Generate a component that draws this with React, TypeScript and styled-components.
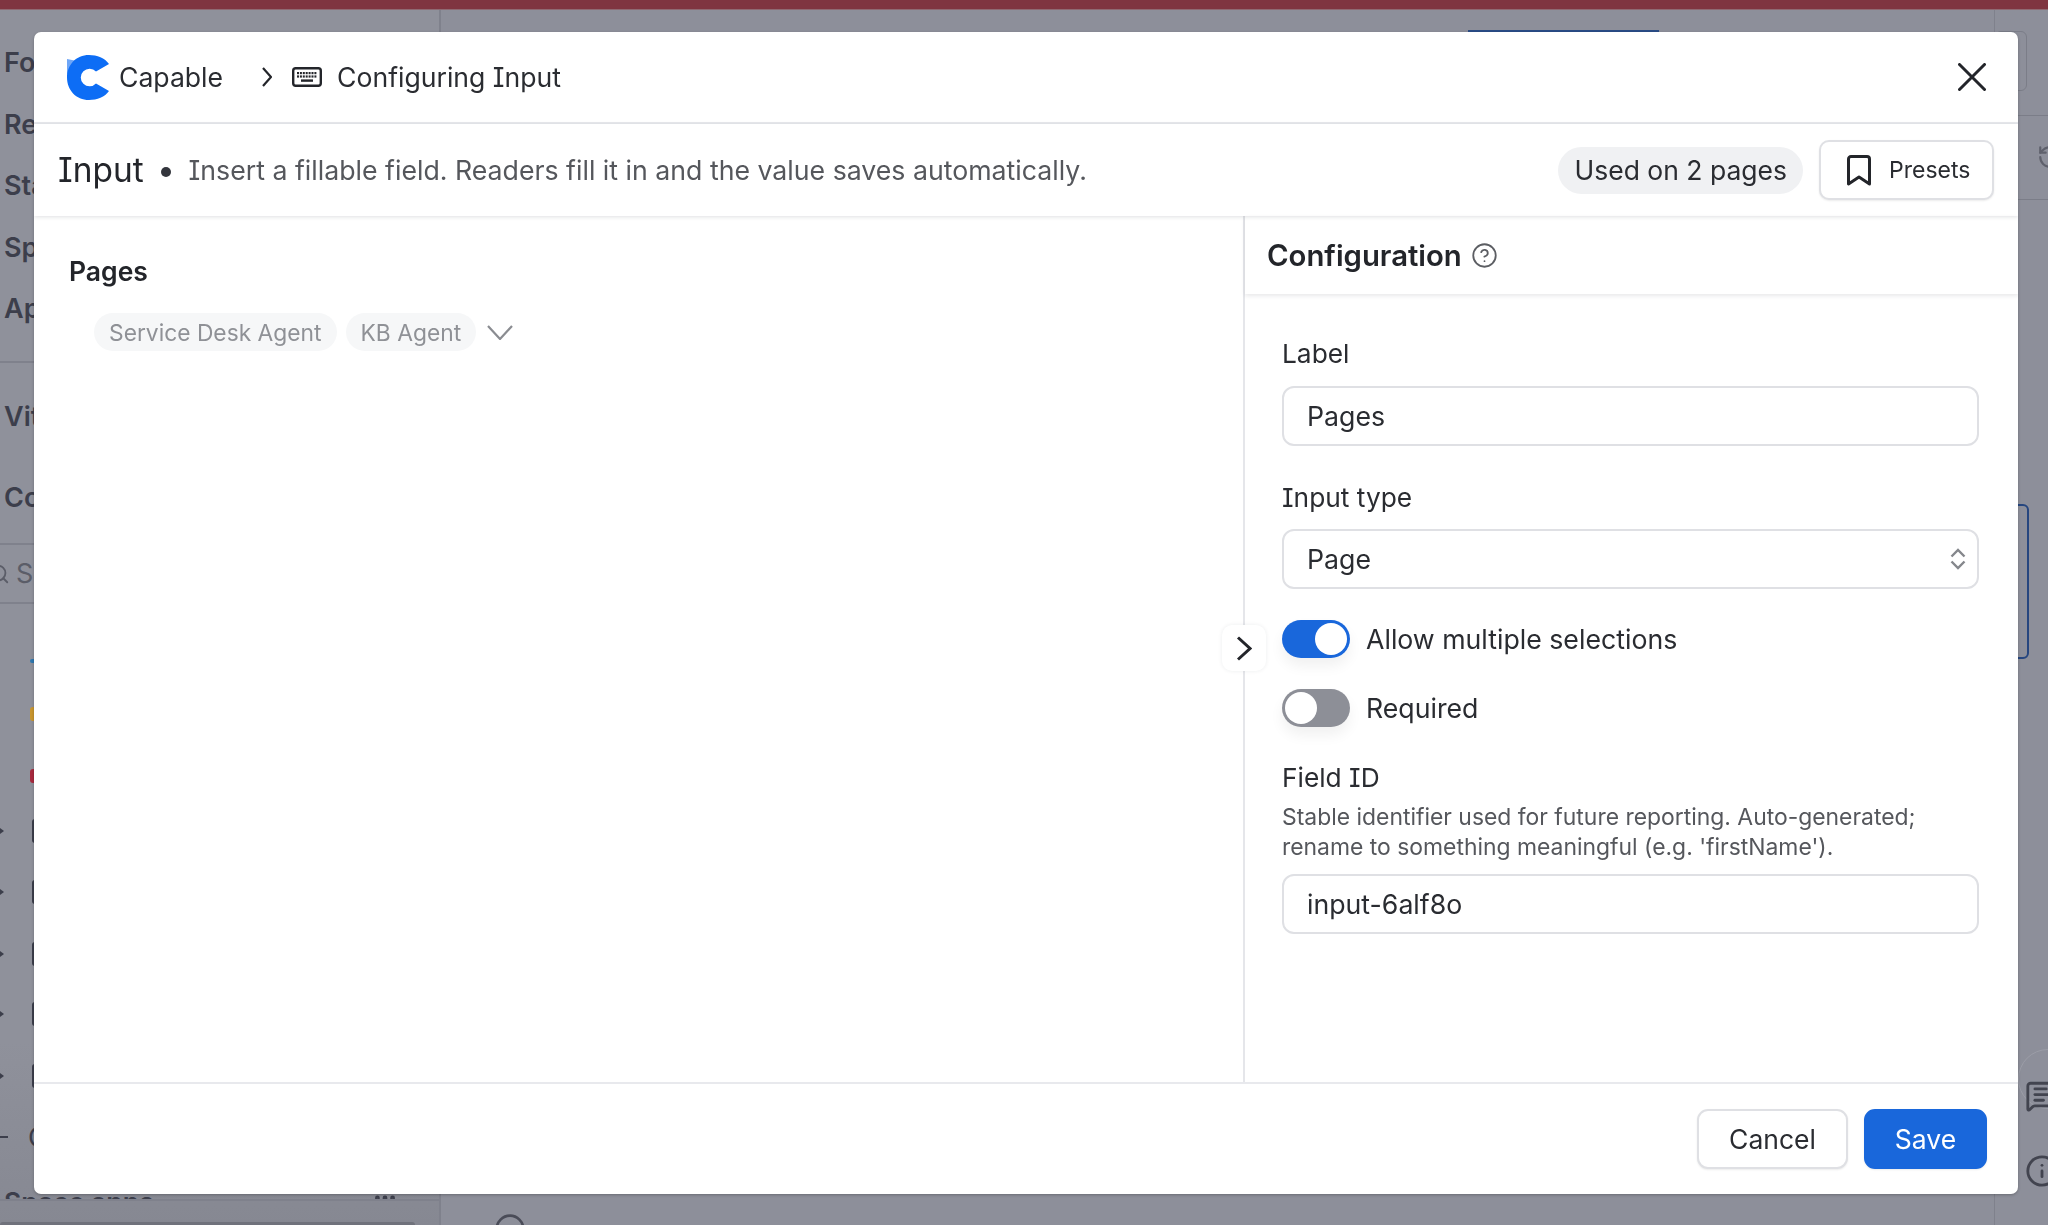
import React from 'react';
import styled, { createGlobalStyle } from 'styled-components';
import { CircleDot, CircleHelp, Ellipsis, Info, MessageSquareText, RotateCcw, Search } from 'lucide-react';

const GlobalStyle = createGlobalStyle`
  html, body {
    margin: 0;
    padding: 0;
    height: 100%;
    overflow: hidden;
    font-family: Inter, "Liberation Sans", sans-serif;
    font-feature-settings: "cv08" 1;
    color: #23252a;
  }
  * { box-sizing: border-box; }
  svg { flex: none; }
`;

/* ---------- page behind the dialog ---------- */

const Page = styled.div`
  width: 2048px;
  height: 1225px;
  display: flex;
  flex-direction: column;
  overflow: hidden;
  background: #8d8f9a;
`;

const TopBar = styled.div`
  height: 10px;
  flex: none;
  background: #7f3540;
  border-bottom: 1px solid #8f6a72;
`;

const PageBody = styled.div`
  flex: 1;
  display: flex;
  min-height: 0;
`;

const Sidebar = styled.aside`
  width: 441px;
  flex: none;
  display: flex;
  flex-direction: column;
  padding-top: 22px;
  border-right: 2px solid #7f818c;
  background: linear-gradient(180deg, #8f919b 0%, #8f919b 85%, #868892 100%);
`;

const NavLabel = styled.div<{ $h?: number }>`
  height: ${(p) => p.$h ?? 61.5}px;
  flex: none;
  display: flex;
  align-items: center;
  padding-left: 4px;
  font-size: 27px;
  font-weight: 600;
  color: #3c3e4b;
  white-space: nowrap;
`;

const SideRule = styled.div<{ $top: number; $bottom: number }>`
  height: 2px;
  flex: none;
  margin: ${(p) => p.$top}px 0 ${(p) => p.$bottom}px;
  background: #7f818c;
`;

const SearchRow = styled.div`
  height: 57px;
  flex: none;
  display: flex;
  align-items: center;
  gap: 6px;
  margin-left: -12px;
  font-size: 27px;
  color: #5b5d68;
`;

const TreeList = styled.div`
  display: flex;
  flex-direction: column;
  padding-top: 42px;
`;

const TreeRow = styled.div<{ $top: number }>`
  height: 30px;
  flex: none;
  margin-top: ${(p) => p.$top}px;
  display: flex;
  align-items: center;
`;

const Caret = styled.span<{ $hidden?: boolean }>`
  width: 4px;
  height: 6px;
  flex: none;
  margin-right: 26px;
  background: #3c3e4b;
  opacity: ${(p) => (p.$hidden ? 0 : 1)};
  clip-path: polygon(0 0, 100% 50%, 0 100%);
`;

const Dash = styled.span`
  width: 8px;
  height: 2px;
  flex: none;
  margin-right: 20px;
  background: #3c3e4b;
`;

const TreeIcon = styled.span<{ $color: string; $h: number; $left?: number }>`
  width: 22px;
  height: ${(p) => p.$h}px;
  flex: none;
  margin-left: ${(p) => p.$left ?? 0}px;
  border-radius: 3px;
  background: ${(p) => p.$color};
`;

const TreeText = styled.span`
  font-size: 27px;
  color: #3c3e4b;
`;

const SpaceApps = styled.div`
  height: 14px;
  margin-top: 33px;
  flex: none;
  overflow: hidden;
  display: flex;
  justify-content: space-between;
  padding: 0 41px 0 4px;
  font-size: 26.5px;
  line-height: 34px;
  font-weight: 600;
  color: #3c3e4b;
`;

const SideFoot = styled.div`
  flex: 1;
  display: flex;
  align-items: flex-end;
  border-top: 2px solid #7f818c;
`;

const SideFootBar = styled.div`
  width: 415px;
  height: 3px;
  border-radius: 3px 3px 0 0;
  background: #70727c;
`;

const Main = styled.main`
  flex: 1;
  display: flex;
  flex-direction: column;
  overflow: hidden;
`;

const HiddenAction = styled.div`
  width: 191px;
  height: 40px;
  flex: none;
  margin: 20px 0 0 1027px;
  background: #2a4c86;
`;

const MainFoot = styled.div`
  margin-top: auto;
  height: 12px;
  padding-left: 53px;
  color: #4a4c58;
  overflow: hidden;
`;

const Rail = styled.div`
  width: 54px;
  flex: none;
  display: flex;
  flex-direction: column;
  color: #42444f;
  overflow: hidden;
  border-left: 1px solid #7f818c;
`;

const RailBox = styled.div`
  width: 32px;
  height: 60px;
  flex: none;
  margin: 21px 0 24px;
  border: 1px solid #7b7d88;
  border-radius: 6px;
`;

const RailRule = styled.div<{ $top?: number; $bottom?: number }>`
  height: 1px;
  flex: none;
  margin: ${(p) => p.$top ?? 0}px 0 ${(p) => p.$bottom ?? 0}px;
  background: #7b7d88;
`;

const RailIcon = styled.div<{ $top: number; $left: number }>`
  flex: none;
  margin: ${(p) => p.$top}px 0 0 ${(p) => p.$left}px;
  display: flex;
`;

const RailSelected = styled.div`
  width: 34px;
  height: 155px;
  flex: none;
  margin-top: 304px;
  border: 2px solid #26467f;
  border-radius: 6px;
`;

const RailArc = styled.div`
  width: 60px;
  height: 60px;
  flex: none;
  margin: 390px 0 -30px 23px;
  border: 1px solid #9b9da7;
  border-radius: 50%;
`;

/* ---------- dialog ---------- */

const Backdrop = styled.div`
  position: fixed;
  inset: 0;
  display: flex;
  padding: 32px 30px 31px 34px;
`;

const Modal = styled.div`
  flex: 1;
  display: flex;
  flex-direction: column;
  min-width: 0;
  background: #fff;
  border-radius: 7px;
  overflow: hidden;
  box-shadow: 0 1px 3px rgba(0, 0, 0, 0.25);
`;

const Header = styled.header`
  height: 92px;
  flex: none;
  display: flex;
  align-items: center;
  padding: 0 32px 0 33px;
  border-bottom: 2px solid #e8e9ed;
`;

const Crumb = styled.span`
  font-size: 26.6px;
  color: #2a2c31;
  white-space: nowrap;
`;

const CrumbSeparator = styled.svg`
  margin: 0 20px 0 39px;
  flex: none;
`;

const CloseButton = styled.button`
  margin-left: auto;
  padding: 0;
  border: 0;
  background: none;
  display: flex;
  cursor: pointer;
`;

const SubHeader = styled.div`
  height: 92px;
  flex: none;
  display: flex;
  align-items: center;
  padding: 0 24px;
  position: relative;
  z-index: 1;
  box-shadow: 0 1px 4px rgba(30, 32, 50, 0.14);
`;

const Title = styled.h1`
  margin: 0;
  font-size: 33.4px;
  font-weight: 400;
  color: #23252a;
`;

const Dot = styled.span`
  width: 10px;
  height: 10px;
  flex: none;
  margin: 4px 18px 0 17px;
  border-radius: 50%;
  background: #33353c;
`;

const Description = styled.p`
  margin: 0;
  font-size: 26.7px;
  color: #55575c;
  white-space: nowrap;
`;

const UsagePill = styled.span`
  margin-left: auto;
  height: 47px;
  display: flex;
  align-items: center;
  padding: 0 16px;
  border-radius: 24px;
  background: #f0f1f3;
  font-size: 26.5px;
  color: #2a2c31;
  white-space: nowrap;
`;

const PresetsButton = styled.button`
  height: 60px;
  width: 175px;
  margin-left: 16px;
  display: flex;
  align-items: center;
  gap: 18px;
  padding: 0 0 0 26px;
  background: #fff;
  border: 2px solid #dfe0e4;
  border-radius: 10px;
  box-shadow: 0 1px 2px rgba(0, 0, 0, 0.08);
  font-family: inherit;
  font-size: 23px;
  color: #2a2c31;
`;

const Body = styled.div`
  flex: 1;
  min-height: 0;
  display: flex;
  position: relative;
`;

const LeftPane = styled.section`
  flex: 1;
  padding: 38px 35px;
`;

const PreviewLabel = styled.div`
  font-size: 26.5px;
  line-height: 34px;
  font-weight: 600;
  color: #23252a;
`;

const ChipRow = styled.div`
  margin: 25px 0 0 25px;
  display: flex;
  align-items: center;
  gap: 9px;
`;

const Chip = styled.span`
  height: 38px;
  display: flex;
  align-items: center;
  padding: 0 15px;
  border-radius: 19px;
  background: #f6f7f8;
  font-size: 22.8px;
  color: #8f9196;
  white-space: nowrap;
`;

const ChipCaret = styled.svg`
  margin-left: 2px;
  flex: none;
`;

const RightPane = styled.section`
  width: 775px;
  flex: none;
  display: flex;
  flex-direction: column;
  border-left: 2px solid #e5e6ea;
`;

const ConfigHeader = styled.div`
  height: 78px;
  flex: none;
  display: flex;
  align-items: center;
  gap: 9px;
  padding-left: 22px;
  box-shadow: 0 2px 4px rgba(30, 32, 50, 0.1);
`;

const ConfigTitle = styled.h2`
  margin: 0;
  font-size: 29.3px;
  font-weight: 600;
  color: #23252a;
`;

const Form = styled.div`
  padding: 43px 39px 0 37px;
  display: flex;
  flex-direction: column;
`;

const FieldLabel = styled.label<{ $top?: number; $bottom?: number }>`
  display: block;
  margin: ${(p) => p.$top ?? 0}px 0 ${(p) => p.$bottom ?? 15}px;
  font-size: 26.3px;
  line-height: 34px;
  color: #2a2c31;
`;

const TextInput = styled.input`
  width: 100%;
  height: 60px;
  padding: 0 23px;
  background: #fff;
  border: 2px solid #dfe0e4;
  border-radius: 12px;
  outline: none;
  font-family: inherit;
  font-size: 26.7px;
  color: #2a2c31;
`;

const SelectWrap = styled.div`
  position: relative;
`;

const SelectBox = styled.select`
  width: 100%;
  height: 60px;
  padding: 0 23px;
  appearance: none;
  background: #fff;
  border: 2px solid #dfe0e4;
  border-radius: 12px;
  outline: none;
  font-family: inherit;
  font-size: 26.7px;
  color: #2a2c31;
`;

const SelectArrows = styled.svg`
  position: absolute;
  top: 19px;
  right: 13px;
  pointer-events: none;
`;

const ToggleRow = styled.div<{ $top: number }>`
  margin-top: ${(p) => p.$top}px;
  display: flex;
  align-items: center;
  gap: 16px;
  font-size: 26.7px;
  color: #2a2c31;
`;

const Toggle = styled.span<{ $on?: boolean }>`
  width: 68px;
  height: 38px;
  flex: none;
  display: flex;
  align-items: center;
  justify-content: ${(p) => (p.$on ? 'flex-end' : 'flex-start')};
  padding: 0 3px;
  border-radius: 19px;
  background: ${(p) => (p.$on ? '#1967db' : '#8d8f97')};
  box-shadow: 0 8px 14px rgba(0, 0, 0, 0.06);
`;

const Knob = styled.span`
  width: 32px;
  height: 32px;
  border-radius: 50%;
  background: #fff;
`;

const HelpText = styled.p`
  margin: 0 0 12px;
  font-size: 22.9px;
  line-height: 30px;
  color: #55575c;
`;

const PanelHandle = styled.button`
  position: absolute;
  left: 1188px;
  top: 409px;
  width: 44px;
  height: 46px;
  padding: 0;
  display: flex;
  align-items: center;
  justify-content: center;
  background: #fff;
  border: 0;
  border-radius: 10px;
  box-shadow: 0 0 4px rgba(30, 32, 50, 0.08);
`;

const Footer = styled.footer`
  height: 112px;
  flex: none;
  display: flex;
  justify-content: flex-end;
  gap: 16px;
  padding: 25px 31px 0 0;
  border-top: 2px solid #e8e9ed;
`;

const ActionButton = styled.button<{ $primary?: boolean }>`
  height: 60px;
  width: ${(p) => (p.$primary ? 123 : 151)}px;
  padding: 0;
  font-family: inherit;
  font-size: 26.5px;
  border-radius: 11px;
  color: ${(p) => (p.$primary ? '#fff' : '#2a2c31')};
  background: ${(p) => (p.$primary ? '#1967db' : '#fff')};
  border: 2px solid ${(p) => (p.$primary ? '#1967db' : '#dfe0e4')};
  box-shadow: 0 1px 2px rgba(0, 0, 0, 0.08);
`;

const Logo = () => (
  <svg width="42" height="45" viewBox="0 0 42 45" style={{ marginRight: 10 }}>
    <path d="M0 4 L10 6 L0 20 Z" fill="#6ea6f7" />
    <path
      d="M42 9 C38 3 30 0 22 0 C9 0 0 10 0 22.5 C0 35 9 45 22 45 C30 45 38 42 42 36 L29 28.5 A8.8 8.8 0 1 1 29 16.5 Z"
      fill="#0d6df5"
    />
  </svg>
);

const KeyboardGlyph = () => (
  <svg width="30" height="20" viewBox="0 0 30 20" style={{ marginRight: 15 }}>
    <rect x="1.2" y="1.2" width="27.6" height="17.6" rx="2.5" fill="none" stroke="#23252a" strokeWidth="2.4" />
    {[0, 1, 2, 3, 4, 5, 6].map((i) => (
      <rect key={`a${i}`} x={5 + i * 2.9} y="5" width="2" height="2.2" fill="#23252a" />
    ))}
    {[0, 1, 2, 3, 4, 5, 6].map((i) => (
      <rect key={`b${i}`} x={5 + i * 2.9} y="8.4" width="2" height="2.2" fill="#23252a" />
    ))}
    <rect x="9" y="12.4" width="12" height="2.4" fill="#23252a" />
  </svg>
);

const treeRows = [
  { top: 0, color: '#2f78b0', h: 4, left: 0 },
  { top: 23, color: '#c9962e', h: 14, left: 0 },
  { top: 32, color: '#a82a3f', h: 14, left: 0 },
  { top: 25, color: '#3c3e4b', h: 24, left: 2, caret: true },
  { top: 31, color: '#3c3e4b', h: 24, left: 2, caret: true },
  { top: 32, color: '#3c3e4b', h: 24, left: 2, caret: true },
  { top: 30, color: '#3c3e4b', h: 24, left: 2, caret: true },
  { top: 32, color: '#3c3e4b', h: 24, left: 2, caret: true },
];

const App: React.FC = () => (
  <>
    <GlobalStyle />
    <Page>
      <TopBar />
      <PageBody>
        <Sidebar>
          <NavLabel>For you</NavLabel>
          <NavLabel>Recent</NavLabel>
          <NavLabel>Starred</NavLabel>
          <NavLabel>Spaces</NavLabel>
          <NavLabel>Apps</NavLabel>
          <SideRule $top={21.5} $bottom={22} />
          <NavLabel $h={62}>Vitals</NavLabel>
          <NavLabel $h={100}>Content</NavLabel>
          <SideRule $top={-4} $bottom={0} />
          <SearchRow>
            <Search size={22} strokeWidth={2} />
            Search
          </SearchRow>
          <SideRule $top={0} $bottom={0} />
          <TreeList>
            {treeRows.map((row, i) => (
              <TreeRow key={i} $top={row.top}>
                <Caret $hidden={!row.caret} />
                <TreeIcon $color={row.color} $h={row.h} $left={row.left} />
              </TreeRow>
            ))}
            <TreeRow $top={31}>
              <Dash />
              <TreeText>Guides</TreeText>
            </TreeRow>
          </TreeList>
          <SpaceApps>
            <span>Space apps</span>
            <Ellipsis size={26} strokeWidth={2.4} />
          </SpaceApps>
          <SideFoot>
            <SideFootBar />
          </SideFoot>
        </Sidebar>
        <Main>
          <HiddenAction />
          <MainFoot>
            <CircleDot size={32} strokeWidth={2} />
          </MainFoot>
        </Main>
        <Rail>
          <RailBox />
          <RailRule $bottom={28} />
          <RailIcon $top={0} $left={42}>
            <RotateCcw size={26} strokeWidth={2} color="#5f616c" />
          </RailIcon>
          <RailRule $top={29} />
          <RailSelected />
          <RailArc />
          <RailIcon $top={0} $left={30}>
            <MessageSquareText size={34} strokeWidth={2} />
          </RailIcon>
          <RailIcon $top={41} $left={30}>
            <Info size={34} strokeWidth={2} />
          </RailIcon>
        </Rail>
      </PageBody>
    </Page>

    <Backdrop>
      <Modal role="dialog">
        <Header>
          <Logo />
          <Crumb>Capable</Crumb>
          <CrumbSeparator width="10" height="20" viewBox="0 0 10 20">
            <path d="M1 1 L9 10 L1 19" fill="none" stroke="#23252a" strokeWidth="2.2" />
          </CrumbSeparator>
          <KeyboardGlyph />
          <Crumb>Configuring Input</Crumb>
          <CloseButton aria-label="Close">
            <svg width="28" height="28" viewBox="0 0 28 28">
              <path d="M1.5 1.5 L26.5 26.5 M26.5 1.5 L1.5 26.5" stroke="#23252a" strokeWidth="3" strokeLinecap="round" />
            </svg>
          </CloseButton>
        </Header>

        <SubHeader>
          <Title>Input</Title>
          <Dot />
          <Description>Insert a fillable field. Readers fill it in and the value saves automatically.</Description>
          <UsagePill>Used on 2 pages</UsagePill>
          <PresetsButton>
            <svg width="24" height="31" viewBox="0 0 24 31">
              <path d="M4 1.5 H20 A2.5 2.5 0 0 1 22.5 4 V29 L12 22 L1.5 29 V4 A2.5 2.5 0 0 1 4 1.5 Z" fill="none" stroke="#23252a" strokeWidth="3" strokeLinejoin="round" />
            </svg>
            Presets
          </PresetsButton>
        </SubHeader>

        <Body>
          <LeftPane>
            <PreviewLabel>Pages</PreviewLabel>
            <ChipRow>
              <Chip>Service Desk Agent</Chip>
              <Chip>KB Agent</Chip>
              <ChipCaret width="26" height="15" viewBox="0 0 26 15">
                <path d="M1 1 L13 14 L25 1" fill="none" stroke="#8a8c91" strokeWidth="2.2" />
              </ChipCaret>
            </ChipRow>
          </LeftPane>

          <RightPane>
            <ConfigHeader>
              <ConfigTitle>Configuration</ConfigTitle>
              <CircleHelp size={27} strokeWidth={1.6} color="#5c5e63" />
            </ConfigHeader>
            <Form>
              <FieldLabel>Label</FieldLabel>
              <TextInput defaultValue="Pages" readOnly />
              <FieldLabel $top={35} $bottom={14}>Input type</FieldLabel>
              <SelectWrap>
                <SelectBox defaultValue="page">
                  <option value="page">Page</option>
                </SelectBox>
                <SelectArrows width="16" height="22" viewBox="0 0 16 22">
                  <path d="M1.5 8.5 L8 2 L14.5 8.5 M1.5 13.5 L8 20 L14.5 13.5" fill="none" stroke="#85878c" strokeWidth="2.4" />
                </SelectArrows>
              </SelectWrap>
              <ToggleRow $top={31}>
                <Toggle $on>
                  <Knob />
                </Toggle>
                Allow multiple selections
              </ToggleRow>
              <ToggleRow $top={31}>
                <Toggle>
                  <Knob />
                </Toggle>
                Required
              </ToggleRow>
              <FieldLabel $top={34} $bottom={7}>Field ID</FieldLabel>
              <HelpText>
                Stable identifier used for future reporting. Auto-generated;
                <br />
                rename to something meaningful (e.g. 'firstName').
              </HelpText>
              <TextInput defaultValue="input-6alf8o" readOnly />
            </Form>
          </RightPane>

          <PanelHandle aria-label="Collapse">
            <svg width="16" height="25" viewBox="0 0 16 25">
              <path d="M2 1.5 L14 12.5 L2 23.5" fill="none" stroke="#23252a" strokeWidth="3" />
            </svg>
          </PanelHandle>
        </Body>

        <Footer>
          <ActionButton>Cancel</ActionButton>
          <ActionButton $primary>Save</ActionButton>
        </Footer>
      </Modal>
    </Backdrop>
  </>
);

export default App;
